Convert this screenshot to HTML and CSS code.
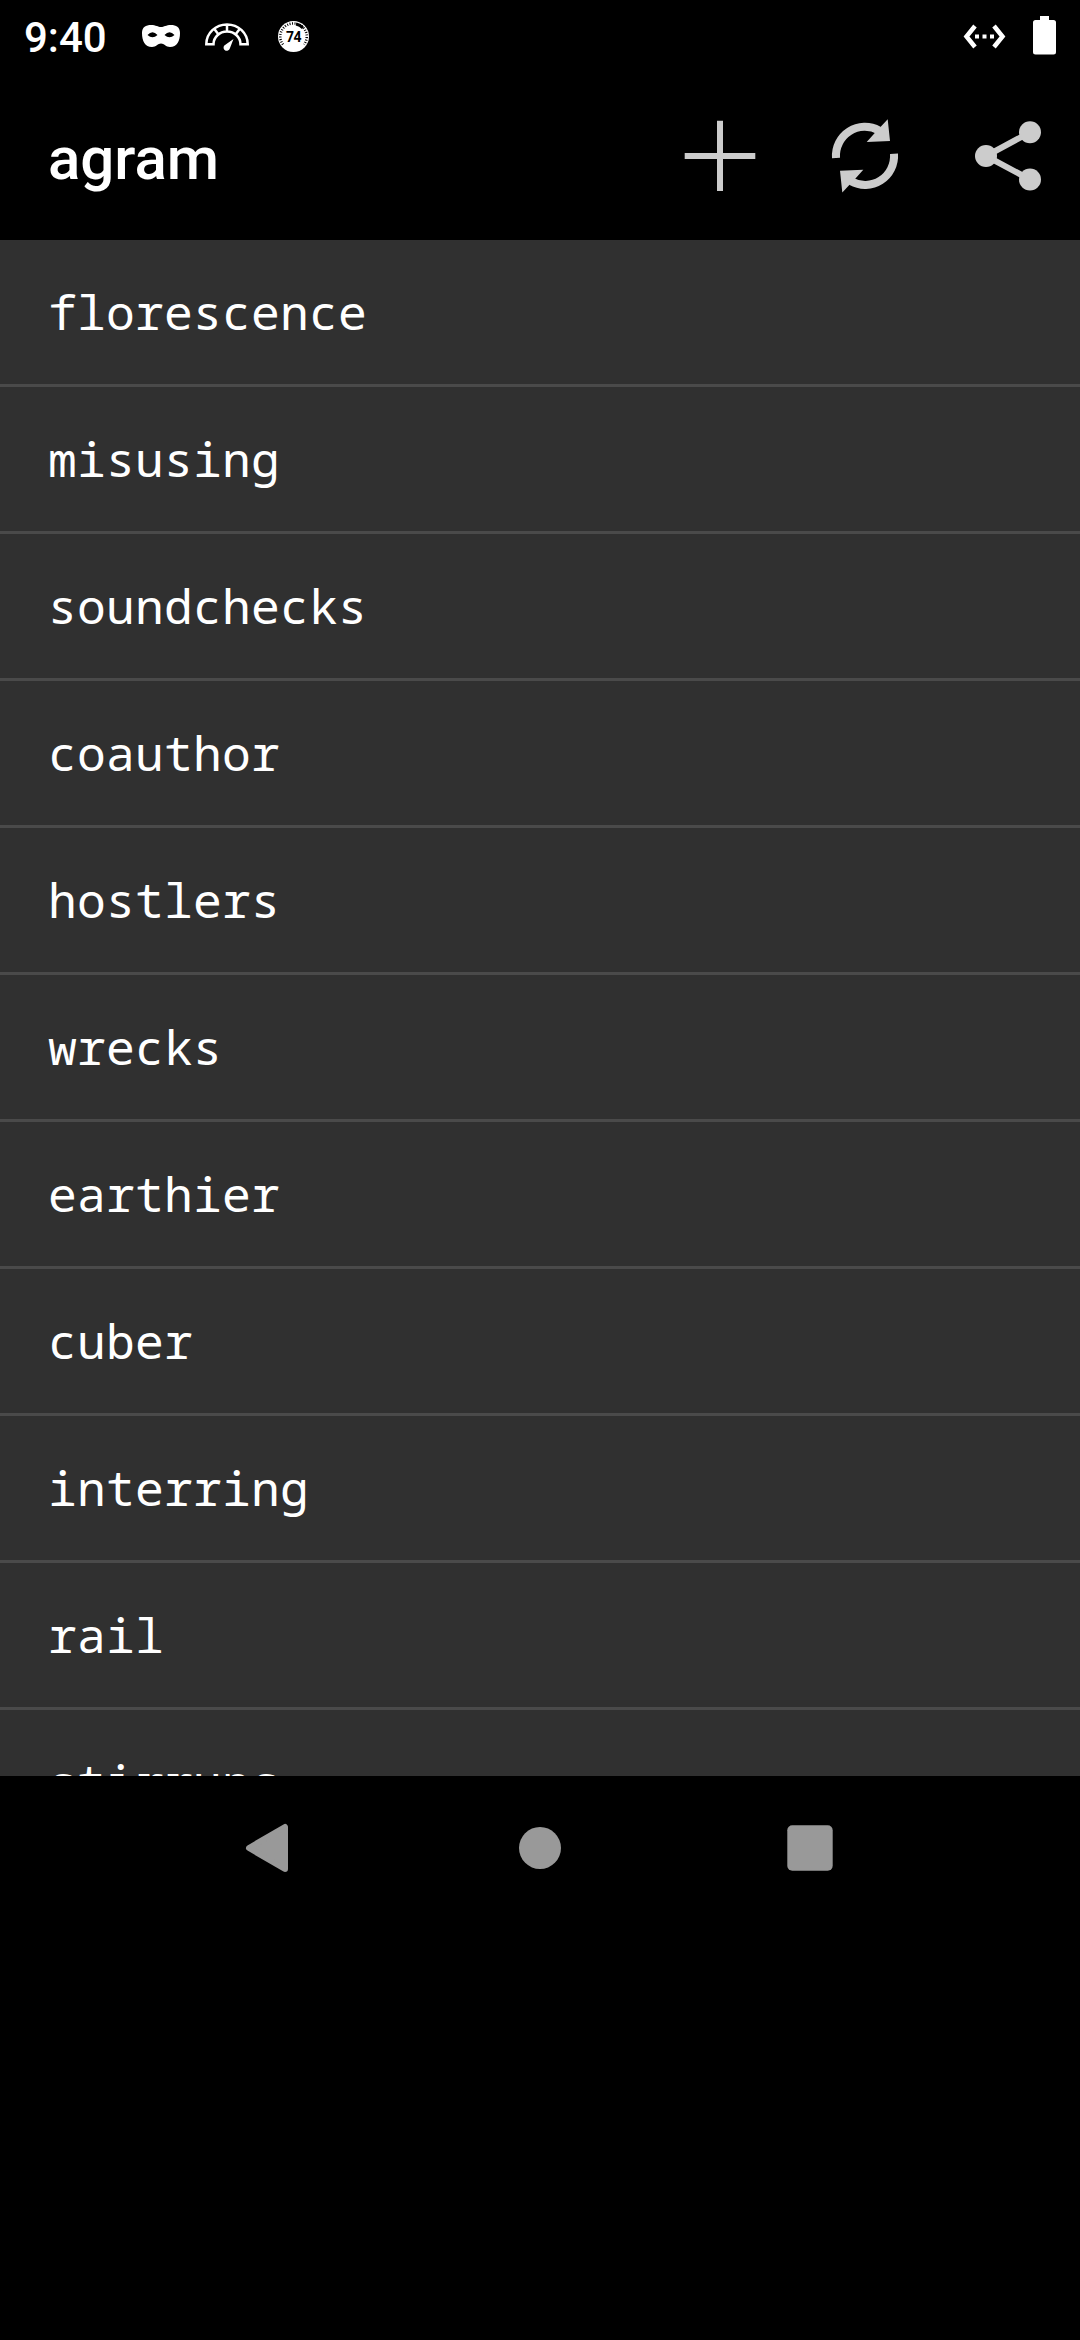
FILE: index.html
```html
<!DOCTYPE html>
<html lang="en">
<head>
<meta charset="utf-8">
<title>agram</title>
<link rel="stylesheet" href="styles.css">
</head>
<body>
<div class="status-bar">
  <span class="clock">9:40</span>
  <svg class="status-icons" viewBox="130 0 200 72" aria-hidden="true">
    <path class="lit" fill-rule="evenodd" d="M142 33C142 27 146 25 151 25C156 25 158 27 161 27C164 27 166 25 171 25C176 25 180 27 180 33C180 41 177 47 170 47C166 47 164 43.500 161 43.500C158 43.500 156 47 152 47C145 47 142 41 142 33ZM147.500 35Q152.500 29.500 157.500 35Q152.500 39.500 147.500 35ZM164.500 35Q169.500 29.500 174.500 35Q169.500 39.500 164.500 35Z"/>
    <path class="gauge" d="M206.300 44.200A20.700 19.800 0 0 1 247.700 44.200H240.500A13.500 12.700 0 0 0 213.500 44.200ZM227 24V31M214 28.500L218.500 34.500M240 28.500L235.500 34.500"/>
    <path class="lit" d="M233.500 39L229.800 48.500A3.200 3.200 0 1 1 224.300 45.500Z"/>
    <circle class="lit" cx="293.500" cy="36.500" r="15.500"/>
    <path class="ticks" d="M283 44.500A13 13 0 0 1 293.500 23.500A13 13 0 0 1 304 44.500"/>
    <path class="sweep" d="M296 24A13 13 0 0 1 303 28"/>
    <text class="badge" x="293.500" y="41.500" text-anchor="middle">74</text>
  </svg>
  <svg class="system-icons" viewBox="956 0 124 72" aria-hidden="true">
    <path class="chevrons" d="M975 26L966.500 36.500L975 47M994 26L1002.500 36.500L994 47"/>
    <path class="lit" d="M975 34.500h4v4h-4zM982.500 34.500h4v4h-4zM990 34.500h4v4h-4z"/>
    <path class="lit" d="M1040 16h9v4h4.500q2.500 0 2.500 2.500v29.500q0 2.500 -2.500 2.500h-18q-2.500 0 -2.500 -2.500v-29.500q0 -2.500 2.500 -2.500h4.500z"/>
  </svg>
</div>
<header class="app-bar">
  <h1 class="title">agram</h1>
  <svg class="action" viewBox="0 0 144 144" role="img" aria-label="Add"><path d="M69 36.700h6V69h32.300v6H75v32H69V75H36.700V69H69z"/></svg>
  <svg class="action" viewBox="0 0 144 144" role="img" aria-label="Refresh">
    <g id="half"><path class="arc" d="M44 74A29 29 0 0 1 87 46.500"/><path d="M95.700 35.300L98 57L74.700 58L83 48.700L88.700 42.700Z"/></g>
    <use href="#half" transform="rotate(180 73 71.900)"/>
  </svg>
  <svg class="action" viewBox="0 0 144 144" role="img" aria-label="Share"><path class="link" d="M94 48.300L50 72L94 95.500"/><circle cx="94" cy="48.300" r="11"/><circle cx="50" cy="72" r="11"/><circle cx="94" cy="95.500" r="11"/></svg>
</header>
<ul class="words">
  <li>florescence</li>
  <li>misusing</li>
  <li>soundchecks</li>
  <li>coauthor</li>
  <li>hostlers</li>
  <li>wrecks</li>
  <li>earthier</li>
  <li>cuber</li>
  <li>interring</li>
  <li>rail</li>
  <li>stirrups</li>
</ul>
<nav class="nav-bar">
  <svg viewBox="0 0 270 144" role="img" aria-label="Back"><path class="back" d="M114 72L150 51V93Z"/></svg>
  <svg viewBox="0 0 270 144" role="img" aria-label="Home"><circle cx="135" cy="72" r="21"/></svg>
  <svg viewBox="0 0 270 144" role="img" aria-label="Recents"><rect x="112.300" y="49.300" width="45.400" height="45.400" rx="5"/></svg>
</nav>
</body>
</html>
```
FILE: styles.css
```css
* { box-sizing: border-box; }
body {
  margin: 0;
  min-height: 2340px;
  background: #000;
  color: #fff;
  font-family: Roboto, sans-serif;
}
svg { display: block; flex: none; }
.status-bar {
  display: flex;
  height: 72px;
  padding-left: 24px;
}
.clock {
  width: 106px;
  font-size: 42px;
  font-weight: 500;
  line-height: 75px;
}
.status-icons { width: 200px; height: 72px; }
.system-icons { width: 124px; height: 72px; margin-left: auto; }
.lit { fill: #fff; }
.gauge { fill: none; stroke: #fff; stroke-width: 2.5; }
.chevrons { fill: none; stroke: #fff; stroke-width: 4.5; }
.ticks { fill: none; stroke: #000; stroke-width: 2.5; stroke-dasharray: 1 1.5; }
.sweep { fill: none; stroke: #000; stroke-width: 3; }
.badge { font-size: 14px; font-weight: 700; letter-spacing: -0.5px; fill: #000; }
.app-bar {
  display: flex;
  align-items: center;
  height: 168px;
  padding-left: 48px;
}
.title {
  flex: 1;
  margin: 0;
  padding-top: 5px;
  font-size: 60px;
  font-weight: 500;
  line-height: 72px;
}
.action { width: 144px; height: 144px; fill: #ccc; }
.arc { fill: none; stroke: #ccc; stroke-width: 8; }
.link { fill: none; stroke: #ccc; stroke-width: 6; }
.words {
  height: 1536px;
  margin: 0;
  padding: 0;
  overflow: hidden;
  list-style: none;
  background: #303030;
  font-family: "Droid Sans Mono", "Noto Sans Mono", "DejaVu Sans Mono", monospace;
  font-size: 48px;
  letter-spacing: 0.2px;
}
.words li {
  height: 147px;
  padding-left: 48px;
  border-bottom: 3px solid #4a4a4a;
  line-height: 144px;
}
.nav-bar {
  display: flex;
  justify-content: center;
  height: 144px;
}
.nav-bar svg { width: 270px; height: 144px; fill: #999; }
.back { stroke: #999; stroke-width: 6; stroke-linejoin: round; }
```
